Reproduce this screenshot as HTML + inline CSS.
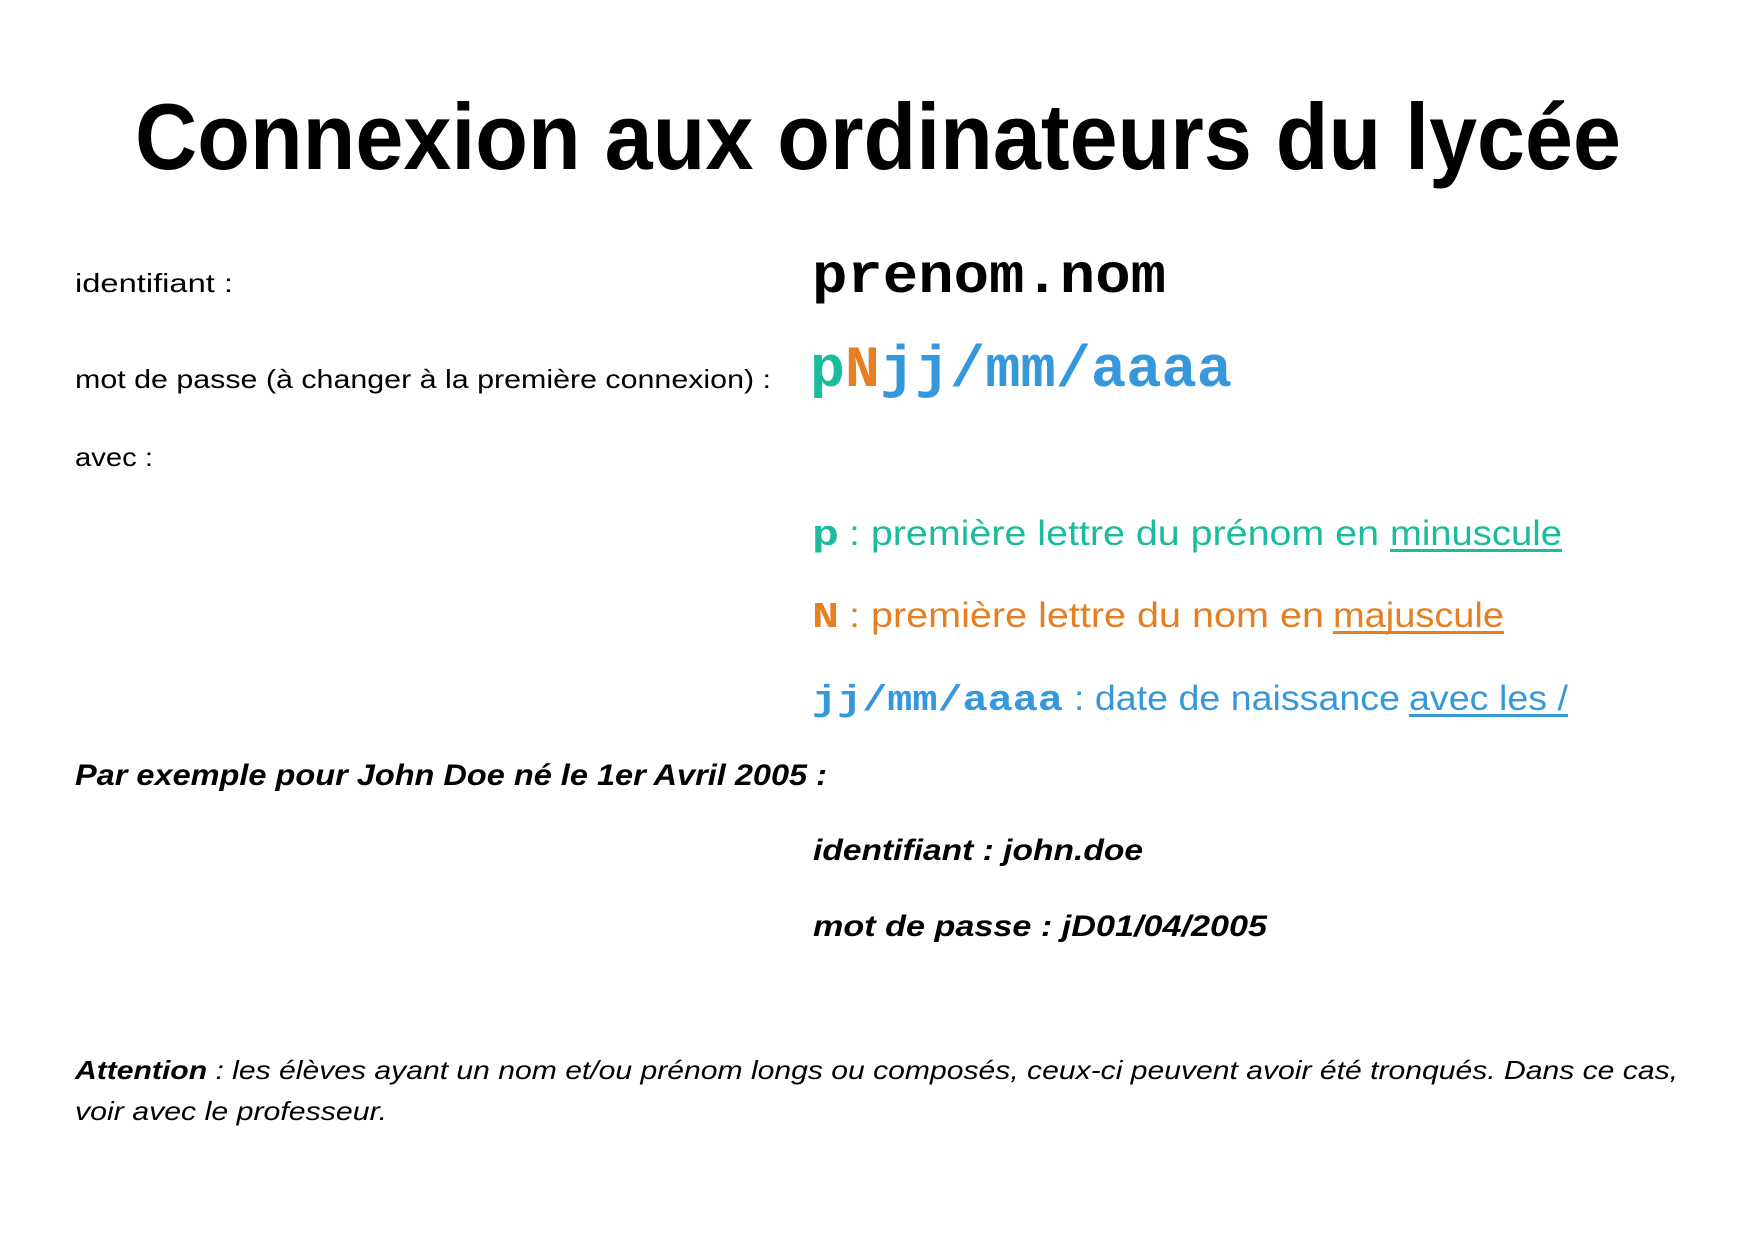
<!DOCTYPE html>
<html><head><meta charset="utf-8"><style>
html,body{margin:0;padding:0;background:#fff;}
svg{display:block}
.s{font-family:"Liberation Sans",sans-serif}
.m{font-family:"Liberation Mono","Courier New",monospace;font-weight:bold}
</style></head><body>
<svg width="1755" height="1241" viewBox="0 0 1755 1241" xmlns="http://www.w3.org/2000/svg">
<rect width="1755" height="1241" fill="#fff"/>
<text class="s" x="135" y="169" font-size="94" font-weight="bold" textLength="1486" lengthAdjust="spacingAndGlyphs">Connexion aux ordinateurs du lycée</text>

<text class="s" x="75" y="292" font-size="26" textLength="158" lengthAdjust="spacingAndGlyphs">identifiant :</text>
<text class="m" x="812" y="292" font-size="56" textLength="354" lengthAdjust="spacingAndGlyphs">prenom.nom</text>

<text class="s" x="75" y="388" font-size="26" textLength="696" lengthAdjust="spacingAndGlyphs">mot de passe (à changer à la première connexion) :</text>
<text class="m" x="810" y="386" font-size="58" fill="#1abc9c">p</text>
<text class="m" x="845" y="386" font-size="58" fill="#e67e22">N</text>
<text class="m" x="880" y="386" font-size="58" fill="#3498db" font-weight="normal" textLength="70" lengthAdjust="spacingAndGlyphs">jj</text>
<text class="m" x="950" y="386" font-size="58" fill="#3498db" textLength="282" lengthAdjust="spacingAndGlyphs">/mm/aaaa</text>

<text class="s" x="75" y="466" font-size="26" textLength="78" lengthAdjust="spacingAndGlyphs">avec :</text>

<text class="m" x="812" y="545" font-size="36" fill="#1abc9c" textLength="27" lengthAdjust="spacingAndGlyphs">p</text>
<text class="s" x="849" y="545" font-size="35" fill="#1abc9c" textLength="530" lengthAdjust="spacingAndGlyphs">: première lettre du prénom en</text>
<text class="s" x="1390" y="545" font-size="35" fill="#1abc9c" textLength="172" lengthAdjust="spacingAndGlyphs">minuscule</text>
<rect x="1390" y="549" width="172" height="3" fill="#1abc9c"/>

<text class="m" x="812" y="627" font-size="36" fill="#e67e22" textLength="27" lengthAdjust="spacingAndGlyphs">N</text>
<text class="s" x="849" y="627" font-size="35" fill="#e67e22" textLength="475" lengthAdjust="spacingAndGlyphs">: première lettre du nom en</text>
<text class="s" x="1333" y="627" font-size="35" fill="#e67e22" textLength="171" lengthAdjust="spacingAndGlyphs">majuscule</text>
<rect x="1333" y="631" width="171" height="3" fill="#e67e22"/>

<text class="m" x="812" y="710" font-size="36" fill="#3498db" textLength="251" lengthAdjust="spacingAndGlyphs">jj/mm/aaaa</text>
<text class="s" x="1074" y="710" font-size="35" fill="#3498db" textLength="326" lengthAdjust="spacingAndGlyphs">: date de naissance</text>
<text class="s" x="1409" y="710" font-size="35" fill="#3498db" textLength="159" lengthAdjust="spacingAndGlyphs">avec les /</text>
<rect x="1409" y="714" width="159" height="3" fill="#3498db"/>

<text class="s" x="75" y="785" font-size="30" font-weight="bold" font-style="italic" textLength="752" lengthAdjust="spacingAndGlyphs">Par exemple pour John Doe né le 1er Avril 2005 :</text>
<text class="s" x="813" y="860" font-size="30" font-weight="bold" font-style="italic" textLength="330" lengthAdjust="spacingAndGlyphs">identifiant : john.doe</text>
<text class="s" x="813" y="936" font-size="30" font-weight="bold" font-style="italic" textLength="454" lengthAdjust="spacingAndGlyphs">mot de passe : jD01/04/2005</text>

<text class="s" x="75" y="1079" font-size="26" font-style="italic" textLength="1603" lengthAdjust="spacingAndGlyphs"><tspan font-weight="bold">Attention</tspan> : les élèves ayant un nom et/ou prénom longs ou composés, ceux-ci peuvent avoir été tronqués. Dans ce cas,</text>
<text class="s" x="75" y="1120" font-size="26" font-style="italic" textLength="312" lengthAdjust="spacingAndGlyphs">voir avec le professeur.</text>
</svg>
</body></html>
